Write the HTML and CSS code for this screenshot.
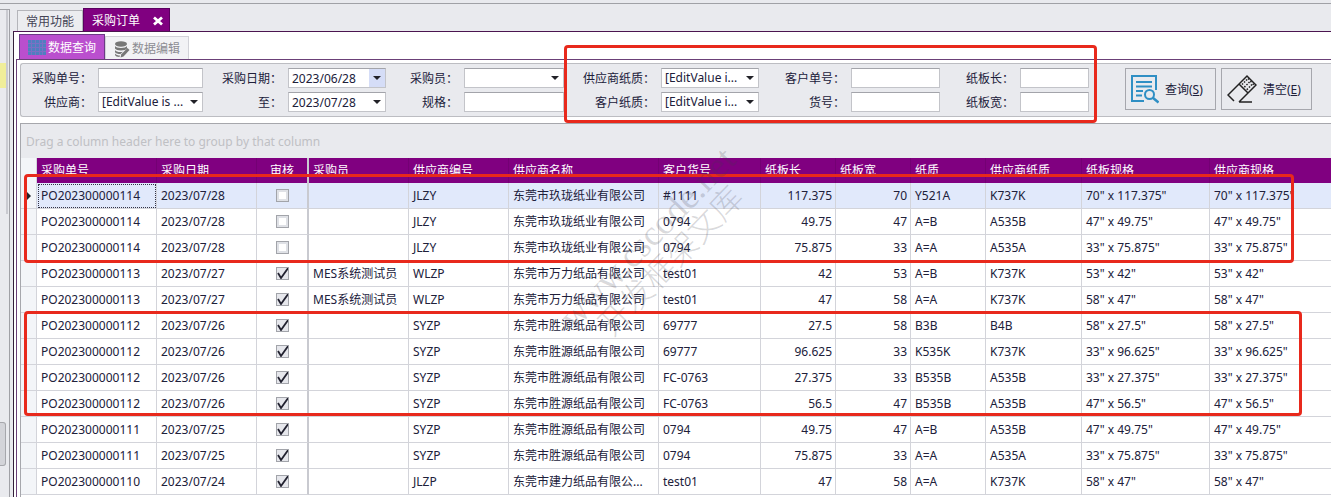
FILE: index.html
```html
<!DOCTYPE html>
<html lang="zh-CN">
  <head>
    <title>采购订单</title>
    <meta charset="utf-8">
    <link rel="stylesheet" href="styles.css">
  </head>
  <body>
    <div class="topline"></div>
    <div class="workspace">
      <div class="side">
        <div class="side-panel">
          <div class="side-list"><div class="side-item"></div></div>
          <div class="side-thumb"></div>
        </div>
      </div>
      <div class="main">
        <div class="tabs">
          <button class="tab">常用功能</button>
          <button class="tab tab-active">采购订单
            <svg width="10" height="10" viewBox="0 0 10 10"><path d="M1 1.500L9 8.500M9 1.500L1 8.500" stroke="#fff" stroke-width="2.800"/></svg>
          </button>
        </div>
        <div class="page">
          <div class="subtabs">
            <button class="subtab subtab-active">
              <svg width="18" height="16" viewBox="0 0 18 16"><path d="M0 0h18v15H0z" fill="#4f7fc0"/><path d="M0 3.500h18M0 7.500h18M0 11.500h18M3.500 0v15M7.500 0v15M11.500 0v15M14.500 0v15" stroke="#7a70c4"/></svg>
              数据查询
            </button>
            <button class="subtab">
              <svg width="16" height="17" viewBox="0 0 16 17"><g fill="#777"><ellipse cx="7" cy="3" rx="6" ry="2.700"/><path d="M1 5c1 2.500 11 2.500 12 0v2.500c-1 2.500-11 2.500-12 0zM1 9c1 2 5 2.500 8 1.800L6.500 13C4 13 1.500 12.500 1 11zM1 12.500c1 1.500 3 2 5 2L5.500 16C3 16 1.500 15 1 14z"/><path d="M13.500 7l2 2-6 6.500-3 1 .8-3.200z"/></g></svg>
              数据编辑
            </button>
          </div>
          <div class="frame">
            <form class="filter">
              <div class="fields">
                <label for="po">采购单号：</label>
                <input type="text" id="po">
                <label for="from">采购日期：</label>
                <div class="combo"><input type="text" id="from" value="2023/06/28"><button type="button" class="drop drop-hot" aria-label="选择日期"></button></div>
                <label for="buyer">采购员：</label>
                <div class="combo"><select id="buyer"><option></option></select><span class="drop"></span></div>
                <label for="spaper">供应商纸质：</label>
                <div class="combo"><select id="spaper"><option>[EditValue i...</option></select><span class="drop"></span></div>
                <label for="cpo">客户单号：</label>
                <input type="text" id="cpo">
                <label for="len">纸板长：</label>
                <input type="text" id="len">

                <label for="supplier">供应商：</label>
                <div class="combo"><select id="supplier"><option>[EditValue is ...</option></select><span class="drop"></span></div>
                <label for="to">至：</label>
                <div class="combo"><input type="text" id="to" value="2023/07/28"><button type="button" class="drop" aria-label="选择日期"></button></div>
                <label for="spec">规格：</label>
                <input type="text" id="spec">
                <label for="cpaper">客户纸质：</label>
                <div class="combo"><select id="cpaper"><option>[EditValue i...</option></select><span class="drop"></span></div>
                <label for="item">货号：</label>
                <input type="text" id="item">
                <label for="wid">纸板宽：</label>
                <input type="text" id="wid">
              </div>
              <div class="actions">
                <button type="button" class="action">
                  <svg width="28" height="30" viewBox="0 0 28 30" fill="none" stroke="#2f8fc4" stroke-width="2"><path d="M13 27H1V2h24v14"/><path d="M5 8h16M5 12.500h16M5 17h7M5 21.500h6"/><circle cx="18.500" cy="20.500" r="4.500"/><path d="M21.500 23.500l6 5" stroke-width="2.500"/></svg>
                  <span>查询(<u>S</u>)</span>
                </button>
                <button type="button" class="action">
                  <svg width="30" height="30" viewBox="0 0 30 30" fill="none" stroke="#222" stroke-width="1.500"><path d="M7 27L1 21 20 2l9 9-17 17M12 10l9 9M12 28h13"/><g stroke-width="1.500" stroke-dasharray="1.500 2"><path d="M15 9.500l7 7.500M17 7.500l7.500 7.500M19 5.500l7.500 7.500M21 4.500l6 6.500"/></g></svg>
                  <span>清空(<u>E</u>)</span>
                </button>
              </div>
              <div class="mark mark-filter"></div>
            </form>
            <div class="grid">
              <div class="group">Drag a column header here to group by that column</div>
              <table>
                <colgroup>
                  <col class="w-ind"><col class="w-po"><col class="w-m"><col class="w-audit"><col class="w-m"><col class="w-m"><col class="w-name"><col class="w-item"><col class="w-s"><col class="w-s"><col class="w-s"><col class="w-paper"><col class="w-spec"><col>
                </colgroup>
                <thead>
                  <tr><th class="ind"></th><th>采购单号</th><th>采购日期</th><th class="audit">审核</th><th>采购员</th><th>供应商编号</th><th>供应商名称</th><th>客户货号</th><th>纸板长</th><th>纸板宽</th><th>纸质</th><th>供应商纸质</th><th>纸板规格</th><th>供应商规格</th></tr>
                </thead>
                <tbody>
                  <tr class="selected"><td class="ind"><i class="arrow"></i></td><td class="focus">PO202300000114</td><td>2023/07/28</td><td class="audit"><input type="checkbox" aria-label="审核"></td><td></td><td>JLZY</td><td>东莞市玖珑纸业有限公司</td><td>#1111</td><td class="num">117.375</td><td class="num">70</td><td>Y521A</td><td>K737K</td><td>70" x 117.375"</td><td>70" x 117.375"</td></tr>
                  <tr><td class="ind"></td><td>PO202300000114</td><td>2023/07/28</td><td class="audit"><input type="checkbox" aria-label="审核"></td><td></td><td>JLZY</td><td>东莞市玖珑纸业有限公司</td><td>0794</td><td class="num">49.75</td><td class="num">47</td><td>A=B</td><td>A535B</td><td>47" x 49.75"</td><td>47" x 49.75"</td></tr>
                  <tr><td class="ind"></td><td>PO202300000114</td><td>2023/07/28</td><td class="audit"><input type="checkbox" aria-label="审核"></td><td></td><td>JLZY</td><td>东莞市玖珑纸业有限公司</td><td>0794</td><td class="num">75.875</td><td class="num">33</td><td>A=A</td><td>A535A</td><td>33" x 75.875"</td><td>33" x 75.875"</td></tr>
                  <tr><td class="ind"></td><td>PO202300000113</td><td>2023/07/27</td><td class="audit"><input type="checkbox" aria-label="审核" checked></td><td>MES系统测试员</td><td>WLZP</td><td>东莞市万力纸品有限公司</td><td>test01</td><td class="num">42</td><td class="num">53</td><td>A=B</td><td>K737K</td><td>53" x 42"</td><td>53" x 42"</td></tr>
                  <tr><td class="ind"></td><td>PO202300000113</td><td>2023/07/27</td><td class="audit"><input type="checkbox" aria-label="审核" checked></td><td>MES系统测试员</td><td>WLZP</td><td>东莞市万力纸品有限公司</td><td>test01</td><td class="num">47</td><td class="num">58</td><td>A=A</td><td>K737K</td><td>58" x 47"</td><td>58" x 47"</td></tr>
                  <tr><td class="ind"></td><td>PO202300000112</td><td>2023/07/26</td><td class="audit"><input type="checkbox" aria-label="审核" checked></td><td></td><td>SYZP</td><td>东莞市胜源纸品有限公司</td><td>69777</td><td class="num">27.5</td><td class="num">58</td><td>B3B</td><td>B4B</td><td>58" x 27.5"</td><td>58" x 27.5"</td></tr>
                  <tr><td class="ind"></td><td>PO202300000112</td><td>2023/07/26</td><td class="audit"><input type="checkbox" aria-label="审核" checked></td><td></td><td>SYZP</td><td>东莞市胜源纸品有限公司</td><td>69777</td><td class="num">96.625</td><td class="num">33</td><td>K535K</td><td>K737K</td><td>33" x 96.625"</td><td>33" x 96.625"</td></tr>
                  <tr><td class="ind"></td><td>PO202300000112</td><td>2023/07/26</td><td class="audit"><input type="checkbox" aria-label="审核" checked></td><td></td><td>SYZP</td><td>东莞市胜源纸品有限公司</td><td>FC-0763</td><td class="num">27.375</td><td class="num">33</td><td>B535B</td><td>A535B</td><td>33" x 27.375"</td><td>33" x 27.375"</td></tr>
                  <tr><td class="ind"></td><td>PO202300000112</td><td>2023/07/26</td><td class="audit"><input type="checkbox" aria-label="审核" checked></td><td></td><td>SYZP</td><td>东莞市胜源纸品有限公司</td><td>FC-0763</td><td class="num">56.5</td><td class="num">47</td><td>B535B</td><td>A535B</td><td>47" x 56.5"</td><td>47" x 56.5"</td></tr>
                  <tr><td class="ind"></td><td>PO202300000111</td><td>2023/07/25</td><td class="audit"><input type="checkbox" aria-label="审核" checked></td><td></td><td>SYZP</td><td>东莞市胜源纸品有限公司</td><td>0794</td><td class="num">49.75</td><td class="num">47</td><td>A=B</td><td>A535B</td><td>47" x 49.75"</td><td>47" x 49.75"</td></tr>
                  <tr><td class="ind"></td><td>PO202300000111</td><td>2023/07/25</td><td class="audit"><input type="checkbox" aria-label="审核" checked></td><td></td><td>SYZP</td><td>东莞市胜源纸品有限公司</td><td>0794</td><td class="num">75.875</td><td class="num">33</td><td>A=A</td><td>A535A</td><td>33" x 75.875"</td><td>33" x 75.875"</td></tr>
                  <tr><td class="ind"></td><td>PO202300000110</td><td>2023/07/24</td><td class="audit"><input type="checkbox" aria-label="审核" checked></td><td></td><td>JLZP</td><td>东莞市建力纸品有限公...</td><td>test01</td><td class="num">47</td><td class="num">58</td><td>A=A</td><td>K737K</td><td>58" x 47"</td><td>58" x 47"</td></tr>
                </tbody>
              </table>
              <div class="mark mark-new"></div>
              <div class="mark mark-checked"></div>
              <div class="watermark"><span class="site">www.cscode.net</span><br>开发框架文库</div>
            </div>
          </div>
        </div>
      </div>
    </div>
  </body>
</html>
```
FILE: styles.css
```css
*{
  box-sizing: border-box;
}

body{
  margin: 0;
  height: 100vh;
  overflow: hidden;
  display: flex;
  flex-direction: column;
  background: #e9eaee;
  color: #20203a;
  font-family: "Noto Sans", "Noto Sans CJK SC", sans-serif;
  font-size: 12px;
  line-height: 16px;
}

button, input, select{
  font: inherit;
  color: inherit;
  margin: 0;
  padding: 0;
}

.topline{
  height: 4px;
  flex: none;
  border-bottom: 1px solid #a0a1a6;
}

.workspace{
  flex: 1;
  min-height: 0;
  display: flex;
}

/* left dock */
.side{
  width: 13px;
  flex: none;
  padding-top: 5px;
}

.side-panel{
  width: 10px;
  height: 100%;
  border-top: 1px solid #a0a1a6;
  border-right: 1px solid #a0a1a6;
}

.side-list{
  width: 8px;
  height: 204px;
  padding-top: 53px;
  border-right: 2px solid #c9cad0;
}

.side-item{
  height: 25px;
  background: #f0ee9a;
}

.side-thumb{
  width: 6px;
  height: 44px;
  margin-top: 208px;
  border: 1px solid #a6a7ac;
  border-left: 0;
  border-radius: 0 3px 3px 0;
  background: #d3d4d9;
}

.main{
  flex: 1;
  min-width: 0;
  display: flex;
  flex-direction: column;
}

.tabs{
  height: 27px;
  flex: none;
  display: flex;
  align-items: flex-end;
  padding-left: 4px;
}

.tab{
  height: 21px;
  padding: 2px 8px 0;
  border: 1px solid #b4b5ba;
  border-bottom: 0;
  background: #ecedf0;
  color: #444455;
}

.tab-active{
  height: 23px;
  display: flex;
  align-items: center;
  gap: 13px;
  padding: 2px 6px 0 8px;
  border-color: #5a0060;
  background: #800080;
  color: #ffffff;
}

.page{
  flex: 1;
  min-height: 0;
  display: flex;
  flex-direction: column;
  padding: 2px 0 0 2px;
  border-top: 1px solid #4b1550;
  border-left: 1px solid #33203a;
  background: #ffffff;
}

.subtabs{
  height: 25px;
  flex: none;
  display: flex;
  align-items: flex-end;
  padding-left: 3px;
}

.subtab{
  height: 23px;
  display: flex;
  align-items: center;
  gap: 2px;
  padding: 2px 8px 0;
  border: 1px solid #d2d2d8;
  border-bottom: 0;
  background: #f2f2f5;
  color: #8c8c92;
}

.subtab-active{
  height: 25px;
  border-color: #6c3a86;
  background: #ba4fce;
  color: #ffffff;
}

.frame{
  flex: 1;
  min-height: 0;
  display: flex;
  flex-direction: column;
  gap: 6px;
  padding: 3px 0 0 3px;
  border-top: 1px solid #6b4078;
  border-left: 1px solid #6b4078;
}

/* search conditions */
.filter{
  position: relative;
  flex: none;
  display: flex;
  gap: 36px;
  padding: 4px 0;
  border: 1px solid #bcbdc2;
  border-right: 0;
  border-radius: 3px 0 0 3px;
  background: #e9eaee;
}

.fields{
  display: grid;
  grid-template-columns: 71px 105px 73px 98px 66px 100px 85px 98px 80px 89px 68px 69px;
  grid-auto-rows: 20px;
  gap: 4px 6px;
  align-items: center;
}

.fields label{
  padding-top: 2px;
  text-align: right;
  white-space: nowrap;
}

.fields input, .fields select{
  width: 100%;
  height: 20px;
  padding: 0 3px;
  border: 1px solid #c3c4c9;
  border-top-color: #a3a4aa;
  border-radius: 0;
  background: #ffffff;
}

.fields select{
  appearance: none;
}

.combo{
  position: relative;
}

.drop{
  position: absolute;
  top: 1px;
  right: 1px;
  width: 16px;
  height: 18px;
  border: 0;
  background: none;
  pointer-events: none;
}

.drop::after{
  content: "";
  position: absolute;
  top: 7px;
  left: 4px;
  border: 4px solid transparent;
  border-top-color: #222228;
  border-bottom: 0;
}

.drop-hot{
  background: #d5ddf7;
}

.actions{
  display: flex;
  gap: 5px;
  align-items: flex-start;
}

.action{
  width: 91px;
  height: 42px;
  display: flex;
  align-items: center;
  gap: 6px;
  padding: 0 5px;
  border: 1px solid #a6a7ad;
  background: #e9eaee;
  white-space: nowrap;
}

.action svg{
  flex: none;
}

.action span{
  padding-top: 2px;
}

/* order list */
.grid{
  position: relative;
  flex: 1;
  border-top: 1px solid #a6a7ac;
  border-left: 1px solid #a6a7ac;
}

.group{
  height: 34px;
  padding: 10px 5px;
  background: #e9eaee;
  color: #bfc0c4;
}

table{
  width: 100%;
  table-layout: fixed;
  border-collapse: separate;
  border-spacing: 0;
}

.w-ind{ width: 16px; }
.w-po{ width: 120px; }
.w-m{ width: 100px; }
.w-audit{ width: 52px; }
.w-name{ width: 150px; }
.w-item{ width: 102px; }
.w-s{ width: 75px; }
.w-paper{ width: 96px; }
.w-spec{ width: 128px; }

th{
  height: 25px;
  padding: 0 4px;
  border-right: 1px solid #740074;
  background: #800080;
  color: #ffffff;
  font-weight: normal;
  text-align: left;
}

td{
  height: 26px;
  padding: 0 3px 0 4px;
  border-right: 1px solid #d3d4da;
  border-bottom: 1px solid #d3d4da;
  white-space: nowrap;
}

th:last-child, td:last-child{
  border-right: 0;
}

.selected td{
  background: #e1e9fb;
}

td.focus{
  outline: 1px dotted #333344;
  outline-offset: -2px;
}

th.ind, td.ind{
  padding: 0;
  border-right-color: #d3d4da;
  background: #f3f5f8;
}

.arrow{
  display: block;
  margin-left: 6px;
  width: 0;
  border: 4px solid transparent;
  border-left-color: #222228;
  border-right: 0;
}

th.audit, td.audit{
  padding: 0;
  border-right: 2px solid #c9cad0;
  text-align: center;
}

.num{
  text-align: right;
}

td input{
  appearance: none;
  display: block;
  width: 13px;
  height: 13px;
  margin: 0 auto;
  border: 1px solid #a2a4aa;
  background: #ffffff;
  box-shadow: inset 0 0 0 2px #dfe1e6;
}

td input:checked{
  background: url("data:image/svg+xml,%3Csvg xmlns='http://www.w3.org/2000/svg' viewBox='0 0 13 13'%3E%3Cpath d='M2 6L5 11 12.500 0.500' fill='none' stroke='%23222230' stroke-width='1.800'/%3E%3C/svg%3E") border-box #e6e7ec;
  box-shadow: none;
}

/* red highlight frames over the screen */
.mark{
  position: absolute;
  border: 3px solid #e8291c;
  border-radius: 4px;
  pointer-events: none;
}

.mark-filter{
  top: -19px;
  left: 543px;
  width: 533px;
  height: 78px;
}

.mark-new{
  top: 50px;
  left: 3px;
  width: 1270px;
  height: 89px;
}

.mark-checked{
  top: 187px;
  left: 3px;
  width: 1278px;
  height: 105px;
}

.watermark{
  position: absolute;
  top: 93px;
  left: 518px;
  width: 240px;
  transform: rotate(-46deg);
  color: rgba(60, 60, 70, 0.2);
  font-family: "Liberation Serif", "Noto Sans CJK SC", serif;
  font-size: 32px;
  font-weight: 300;
  line-height: 32px;
  text-align: center;
  white-space: nowrap;
  pointer-events: none;
}

.site{
  font-size: 36px;
}
```
